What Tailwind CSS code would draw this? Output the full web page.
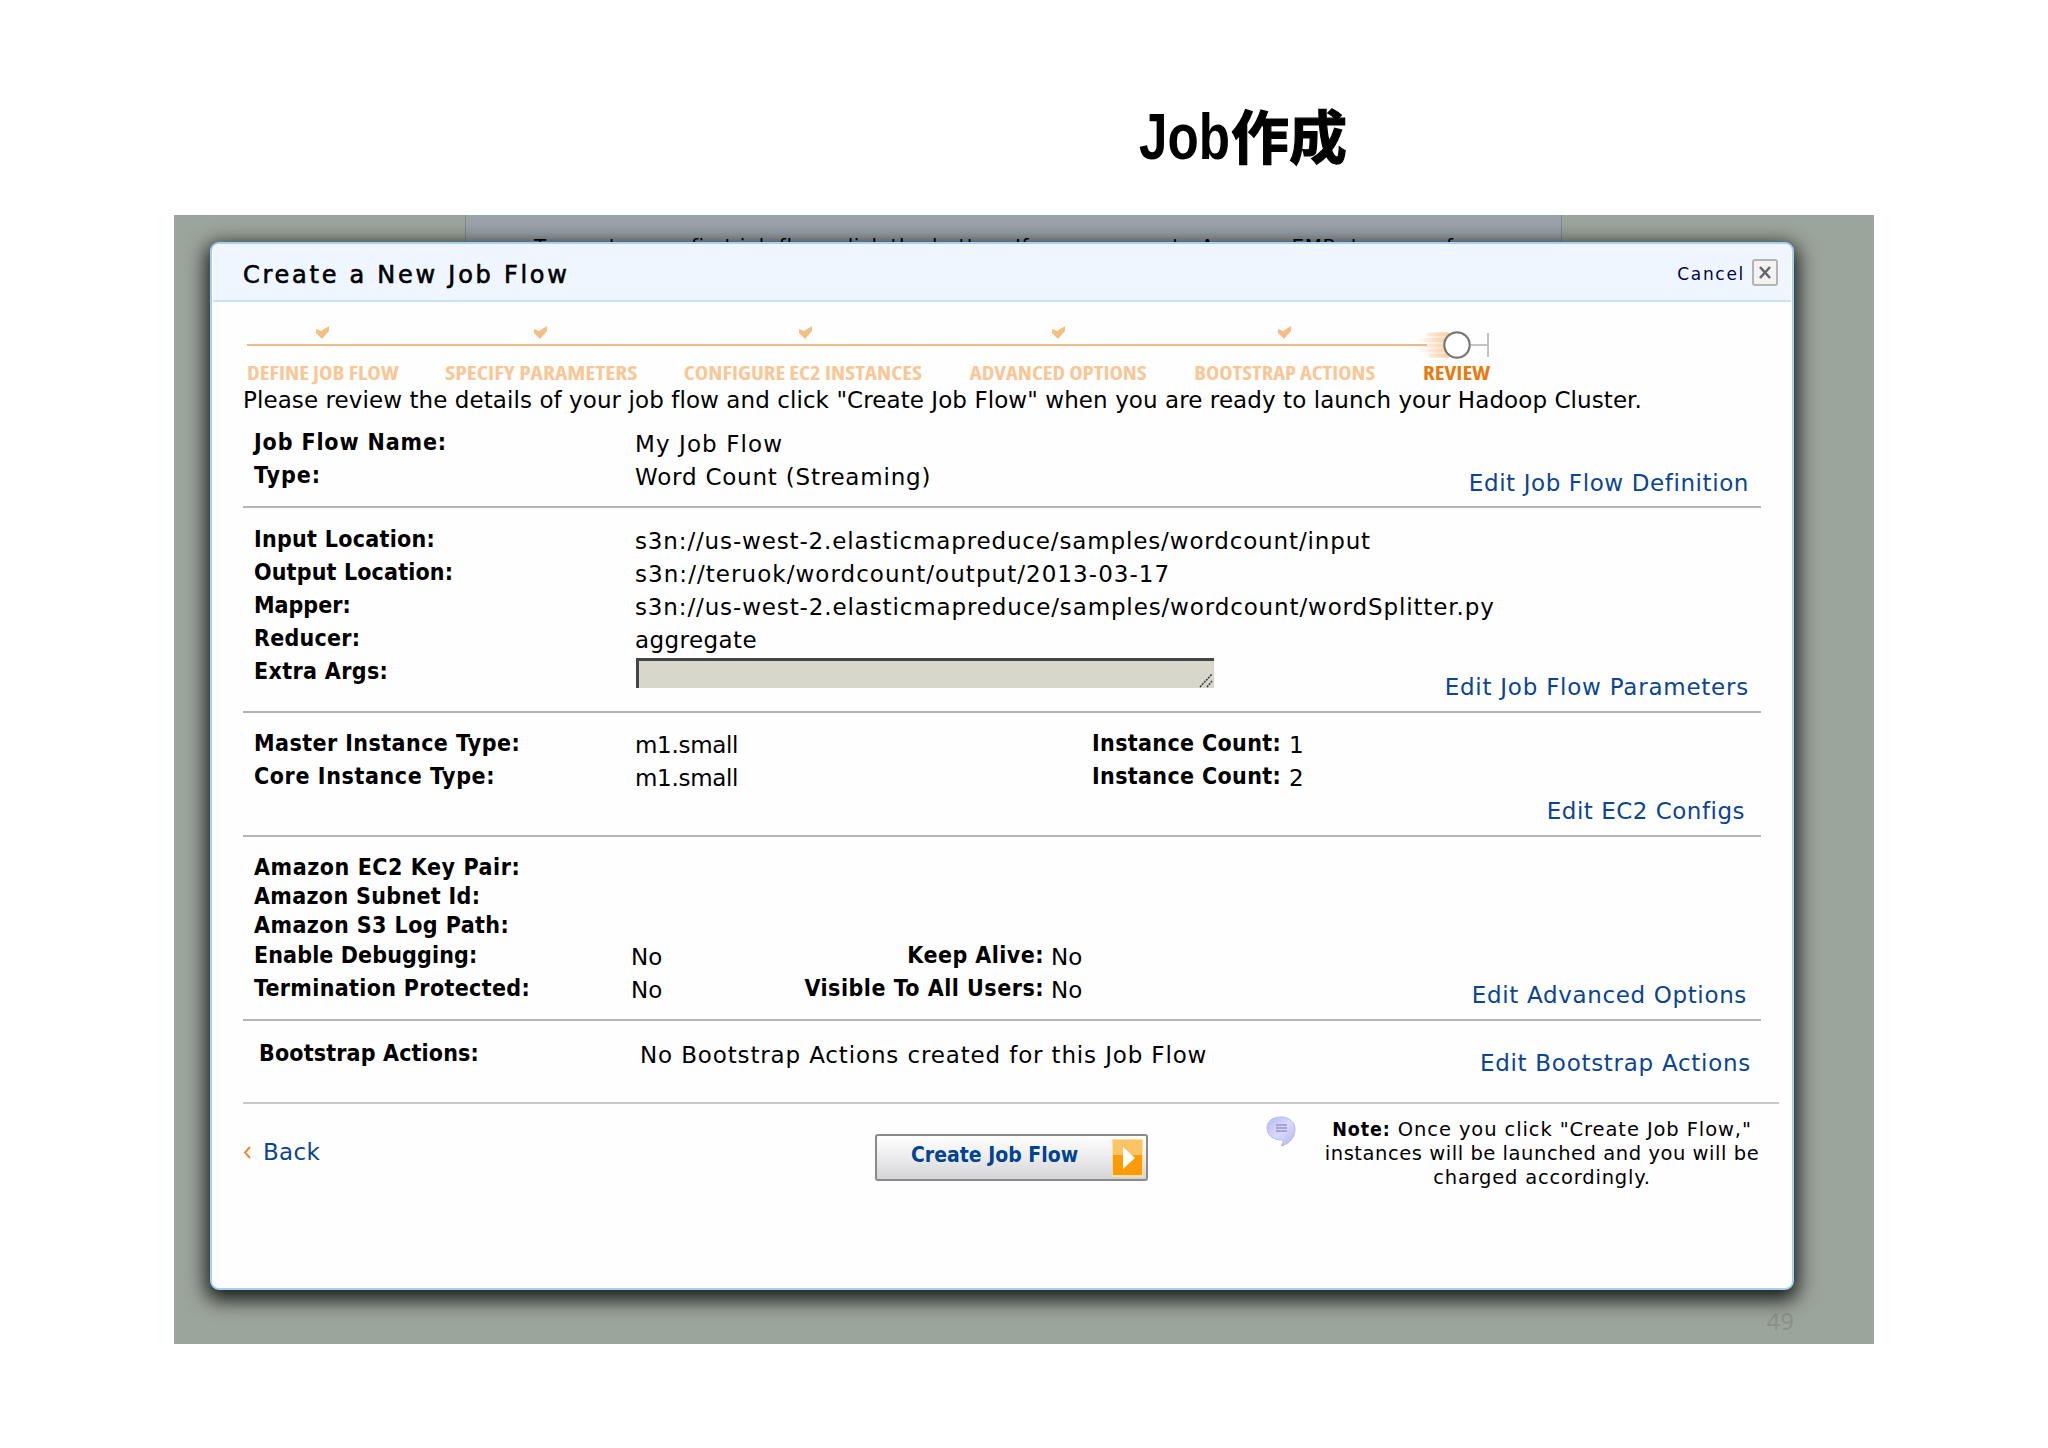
<!DOCTYPE html>
<html lang="ja">
<head>
<meta charset="utf-8">
<title>Job作成</title>
<script src="https://cdn.jsdelivr.net/npm/@tailwindcss/browser@4"></script>
</head>
<body class="w-[2048px] h-[1448px] overflow-hidden bg-white text-black font-['DejaVu_Sans',sans-serif] text-[23px] leading-[33px] whitespace-nowrap">
<h1 class="h-[215px] pt-[98px] pl-[1139px] flex items-baseline text-[58px] leading-[72px] font-bold font-['Noto_Sans_CJK_JP',sans-serif]"><span class="inline-block w-[92px] origin-left scale-x-[0.8] font-['Liberation_Sans',sans-serif] text-[64px]">Job</span><span class="[-webkit-text-stroke:1.2px_black]">作成</span></h1>

<main class="relative ml-[174px] w-[1700px] h-[1129px] bg-[#9ca59b] overflow-hidden">
  <div class="ml-[291px] w-[1097px] h-[120px] border-x border-[#7f8990] bg-[#9ba3aa] pt-[19px] pl-[68px] text-[20px] leading-[24px] tracking-[0.56px]">To create your first job flow, click the button. If you are new to Amazon EMR, try one of</div>
  <div class="absolute right-[80px] bottom-[7px] text-[24px] leading-[33px] text-[#8a928a] font-['Noto_Sans',sans-serif]">49</div>

  <section class="absolute left-[36px] top-[27px] w-[1584px] h-[1048px] rounded-[9px] border-2 border-[#a3d2ee] bg-[#fefefe] shadow-[0_6px_20px_4px_rgba(0,0,0,0.85)] flex flex-col">
    <header class="h-[58px] shrink-0 mx-px border-b-2 border-[#c9e3f4] bg-[#f0f6ff] rounded-t-[7px] flex items-center justify-between pl-[30px] pr-[13px]">
      <h2 class="text-[24px] pt-[6px] tracking-[2.74px] [-webkit-text-stroke:0.6px_black]">Create a New Job Flow</h2>
      <div class="flex items-center gap-[7px] text-[#00004d]"><span class="text-[17px] pt-[4px] tracking-[1.7px]">Cancel</span>
        <svg class="w-[26px] h-[27px]" viewBox="0 0 26 27"><rect x="1" y="1" width="24" height="25" rx="2" fill="#f3f3f3" stroke="#b4b4b4" stroke-width="2"/><path d="M8 8L18 19M18 8L8 19" stroke="#666" stroke-width="2.6"/></svg>
      </div>
    </header>

    <nav class="relative h-[84px] shrink-0 pl-[35px] pt-[24px] flex gap-[48px] text-[19.5px] leading-[20px] font-bold text-[#f9c795] font-['Open_Sans',sans-serif] [font-stretch:75%]">
      <svg class="absolute left-[35px] top-[26px] w-[1246px] h-[34px]" viewBox="0 0 1246 34">
        <defs><linearGradient id="g"><stop offset="0" stop-color="#f7b877" stop-opacity="0"/><stop offset="1" stop-color="#f7b877"/></linearGradient></defs>
        <rect x="0" y="16" width="1180" height="2" fill="#f3b888"/>
        <path d="M1180 5h24v3h-24zM1170 10h30v4h-30zM1164 16h34v3h-34zM1172 21h28v3h-28zM1182 26h20v3h-20z" fill="url(#g)" opacity=".4"/>
        <rect x="1176" y="4" width="26" height="26" fill="url(#g)" opacity=".5"/>
        <path d="M1224 17h17M1241 5v24" stroke="#c4c4c4" stroke-width="2"/>
        <circle cx="1210" cy="17" r="12.7" fill="#fff" stroke="#777" stroke-width="2.2"/>
      </svg>
      <div class="w-[151px] flex flex-col items-center gap-[24px]"><svg class="w-[14px] h-[13px] shrink-0" viewBox="0 0 14 13"><path d="M0 3L5 5L13 0V5L6 13L0 7Z" fill="#f6bd85"/></svg><span class="scale-x-[1.17]">DEFINE JOB FLOW</span></div>
      <div class="w-[190px] flex flex-col items-center gap-[24px]"><svg class="w-[14px] h-[13px] shrink-0" viewBox="0 0 14 13"><path d="M0 3L5 5L13 0V5L6 13L0 7Z" fill="#f6bd85"/></svg><span class="scale-x-[1.2]">SPECIFY PARAMETERS</span></div>
      <div class="w-[238px] flex flex-col items-center gap-[24px]"><svg class="ml-[5px] w-[14px] h-[13px] shrink-0" viewBox="0 0 14 13"><path d="M0 3L5 5L13 0V5L6 13L0 7Z" fill="#f6bd85"/></svg><span class="scale-x-[1.17]">CONFIGURE EC2 INSTANCES</span></div>
      <div class="w-[177px] flex flex-col items-center gap-[24px]"><svg class="w-[14px] h-[13px] shrink-0" viewBox="0 0 14 13"><path d="M0 3L5 5L13 0V5L6 13L0 7Z" fill="#f6bd85"/></svg><span class="scale-x-[1.16]">ADVANCED OPTIONS</span></div>
      <div class="w-[180px] flex flex-col items-center gap-[24px]"><svg class="w-[14px] h-[13px] shrink-0" viewBox="0 0 14 13"><path d="M0 3L5 5L13 0V5L6 13L0 7Z" fill="#f6bd85"/></svg><span class="scale-x-[1.15]">BOOTSTRAP ACTIONS</span></div>
      <div class="w-[66px] flex flex-col items-center pt-[37px] text-[#e87b10]"><span class="scale-x-[1.18]">REVIEW</span></div>
    </nav>

    <div class="ml-[31px] w-[1518px] flex flex-col">
      <p class="h-[40px] leading-[28px] tracking-[0.08px]">Please review the details of your job flow and click "Create Job Flow" when you are ready to launch your Hadoop Cluster.</p>

      <div class="h-[82px] border-b-2 border-[#b5b5b5] flex justify-between pl-[11px] pr-[12px]">
        <div class="grid grid-cols-[381px_800px] grid-rows-[33px_33px]">
          <b class="font-['DejaVu_Sans_Condensed'] tracking-[0.87px]">Job Flow Name:</b><span class="pt-[2px] tracking-[1.1px]">My Job Flow</span>
          <b class="font-['DejaVu_Sans_Condensed'] tracking-[1px]">Type:</b><span class="pt-[2px] tracking-[0.79px]">Word Count (Streaming)</span>
        </div>
        <a class="self-end mb-[6px] text-[#0b4592] tracking-[0.6px]">Edit Job Flow Definition</a>
      </div>

      <div class="h-[205px] border-b-2 border-[#b5b5b5] flex justify-between pl-[11px] pr-[12px] pt-[15px]">
        <div class="grid grid-cols-[381px_800px] auto-rows-[33px] h-[165px]">
          <b class="font-['DejaVu_Sans_Condensed'] tracking-[0.28px]">Input Location:</b><span class="pt-[2px] tracking-[0.86px]">s3n://us-west-2.elasticmapreduce/samples/wordcount/input</span>
          <b class="font-['DejaVu_Sans_Condensed'] tracking-[0.15px]">Output Location:</b><span class="pt-[2px] tracking-[1.05px]">s3n://teruok/wordcount/output/2013-03-17</span>
          <b class="font-['DejaVu_Sans_Condensed']">Mapper:</b><span class="pt-[2px] tracking-[0.87px]">s3n://us-west-2.elasticmapreduce/samples/wordcount/wordSplitter.py</span>
          <b class="font-['DejaVu_Sans_Condensed'] tracking-[0.25px]">Reducer:</b><span class="pt-[2px] tracking-[0.43px]">aggregate</span>
          <b class="font-['DejaVu_Sans_Condensed'] tracking-[0.35px]">Extra Args:</b>
          <div class="ml-px mt-[3px] w-[578px] h-[30px] border-t-3 border-l-3 border-[#454545] bg-[#d7d7cc] flex items-end justify-end"><svg class="w-[15px] h-[15px]" viewBox="0 0 15 15"><path d="M1 14L13 1M8 14L13 8" stroke="#333" stroke-width="1.5" stroke-dasharray="2 1"/></svg></div>
        </div>
        <a class="self-end mb-[7px] text-[#0b4592] tracking-[0.76px]">Edit Job Flow Parameters</a>
      </div>

      <div class="h-[124px] border-b-2 border-[#b5b5b5] flex justify-between pl-[11px] pr-[16px] pt-[14px]">
        <div class="grid grid-cols-[381px_457px_197px_auto] grid-rows-[33px_33px]">
          <b class="font-['DejaVu_Sans_Condensed'] tracking-[0.43px]">Master Instance Type:</b><span class="pt-[2px] tracking-[-0.3px]">m1.small</span><b class="font-['DejaVu_Sans_Condensed'] tracking-[0.35px]">Instance Count:</b><span class="pt-[2px]">1</span>
          <b class="font-['DejaVu_Sans_Condensed'] tracking-[0.6px]">Core Instance Type:</b><span class="pt-[2px] tracking-[-0.3px]">m1.small</span><b class="font-['DejaVu_Sans_Condensed'] tracking-[0.35px]">Instance Count:</b><span class="pt-[2px]">2</span>
        </div>
        <a class="self-end mb-[7px] text-[#0b4592] tracking-[0.5px]">Edit EC2 Configs</a>
      </div>

      <div class="h-[184px] border-b-2 border-[#b5b5b5] flex justify-between pl-[11px] pr-[14px] pt-[14px]">
        <div class="grid grid-cols-[377px_413px_auto] grid-rows-[29px_29px_30px_33px_33px]">
          <b class="font-['DejaVu_Sans_Condensed'] col-span-3 tracking-[0.56px]">Amazon EC2 Key Pair:</b>
          <b class="font-['DejaVu_Sans_Condensed'] col-span-3 tracking-[0.32px]">Amazon Subnet Id:</b>
          <b class="font-['DejaVu_Sans_Condensed'] col-span-3 tracking-[0.43px]">Amazon S3 Log Path:</b>
          <b class="font-['DejaVu_Sans_Condensed'] tracking-[0.12px]">Enable Debugging:</b>
          <div class="flex justify-between"><span class="pt-[2px]">No</span><b class="font-['DejaVu_Sans_Condensed'] tracking-[0.45px]">Keep Alive:</b></div><span class="pt-[2px] pl-[7px]">No</span>
          <b class="font-['DejaVu_Sans_Condensed'] tracking-[0.34px]">Termination Protected:</b>
          <div class="flex justify-between"><span class="pt-[2px]">No</span><b class="font-['DejaVu_Sans_Condensed'] tracking-[0.5px]">Visible To All Users:</b></div><span class="pt-[2px] pl-[7px]">No</span>
        </div>
        <a class="self-end mb-[7px] text-[#0b4592] tracking-[0.65px]">Edit Advanced Options</a>
      </div>

      <div class="h-[83px] w-[1536px] border-b-2 border-[#c9c9c9] flex justify-between pl-[16px] pr-[28px]">
        <div class="grid grid-cols-[381px_auto] pt-[16px]">
          <b class="font-['DejaVu_Sans_Condensed'] tracking-[0.15px]">Bootstrap Actions:</b><span class="pt-[2px] tracking-[0.86px]">No Bootstrap Actions created for this Job Flow</span>
        </div>
        <a class="pt-[26px] text-[#0b4592] tracking-[0.72px]">Edit Bootstrap Actions</a>
      </div>

      <footer class="w-[1536px] flex items-start">
        <a class="shrink-0 flex items-center gap-[12px] mt-[32px] w-[632px] text-[#0b4592] tracking-[0.3px]"><svg class="w-[8px] h-[13px]" viewBox="0 0 8 13"><path d="M7 1L2 6.5L7 12" fill="none" stroke="#ec8a2c" stroke-width="2"/></svg>Back</a>
        <button class="shrink-0 mt-[30px] w-[273px] h-[47px] rounded-[3px] border-2 border-[#8a8a8d] bg-linear-to-b from-white via-[#ececee] to-[#d4d4d6] flex items-center justify-between pl-[34px] pr-[3px] text-[#00438f]">
          <b class="pb-[4px] font-['DejaVu_Sans_Condensed'] text-[21px]">Create Job Flow</b>
          <svg class="w-[31px] h-[38px] shrink-0" viewBox="0 0 31 38"><rect width="31" height="38" fill="#ffe09a"/><rect x="1" y="1" width="29" height="16" fill="#fdc466"/><rect x="1" y="16" width="29" height="20" fill="#fb9b07"/><path d="M11 8L23 19L11 30Z" fill="#fff"/></svg>
        </button>
        <svg class="shrink-0 ml-[118px] mt-[12px] w-[30px] h-[31px]" viewBox="0 0 30 31"><defs><linearGradient id="b" x2="1" y2="1"><stop offset="0" stop-color="#b9b9f0"/><stop offset=".5" stop-color="#d9d9fb"/><stop offset="1" stop-color="#b4b4ee"/></linearGradient></defs><path d="M15 1C23 1 29 6 29 13C29 21 24 28 15 30C17 27 18 25 16 24C7 24 1 19 1 12C1 5 7 1 15 1Z" fill="url(#b)" stroke="#b9b9e6"/><path d="M10 9h11M10 12h11M10 15h11" stroke="#a5a5dc" stroke-width="2"/></svg>
        <p class="shrink-0 mt-[14px] ml-[26px] w-[440px] text-center text-[19.5px] leading-[24px]"><span class="tracking-[0.9px]"><b class="font-['DejaVu_Sans_Condensed']">Note:</b> Once you click "Create Job Flow,"</span><br><span class="tracking-[0.55px]">instances will be launched and you will be</span><br><span class="tracking-[0.8px]">charged accordingly.</span></p>
      </footer>
    </div>
  </section>
</main>
</body>
</html>
